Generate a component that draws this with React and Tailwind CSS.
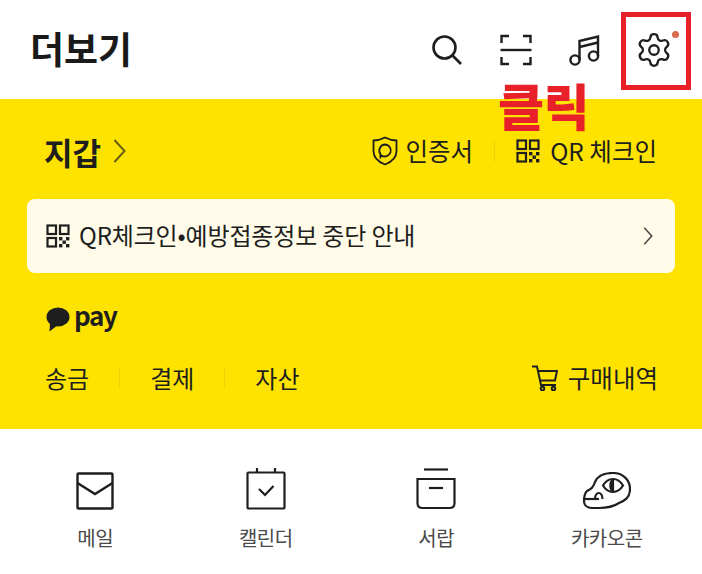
import React from 'react';
import { Settings } from 'lucide-react';

const font = { fontFamily: '"Noto Sans CJK KR", "Noto Sans", sans-serif' };

const Icon = ({ w = 24, h = 24, vb = '0 0 24 24', sw = 2, children }) => (
    <svg width={w} height={h} viewBox={vb} fill="none" stroke="currentColor" strokeWidth={sw} className="shrink-0">
        {children}
    </svg>
);

const QrIcon = () => (
    <svg width="24" height="24" viewBox="0 0 24 24" fill="none" stroke="#1e1e1e" strokeWidth="2.2" className="shrink-0">
        <rect x="1.5" y="1.5" width="8.5" height="8.5" />
        <rect x="14" y="1.5" width="8.5" height="8.5" />
        <rect x="1.5" y="14" width="8.5" height="8.5" />
        <g fill="#1e1e1e" stroke="none">
            <rect x="13" y="13" width="3.4" height="3.4" />
            <rect x="20" y="13" width="3.4" height="3.4" />
            <rect x="16.5" y="16.5" width="3.4" height="3.4" />
            <rect x="13" y="20" width="3.4" height="3.4" />
            <rect x="20" y="20" width="3.4" height="3.4" />
        </g>
    </svg>
);

const Chevron = ({ w, h, color, sw }) => (
    <svg width={w} height={h} viewBox="0 0 12 24" fill="none" stroke={color} strokeWidth={sw} className="shrink-0">
        <path d="M1 1 L11 12 L1 23" />
    </svg>
);

const Divider = () => <div className="w-px h-[22px] bg-[#ecd200]" />;

const tiles = [
    {
        label: '메일',
        icon: (
            <Icon w={38} h={38} vb="0 0 38 38" sw={2.4}>
                <rect x="1.5" y="1.5" width="35" height="35" rx="1" />
                <path d="M1.5 11 L19 22 L36.5 11" />
            </Icon>
        ),
    },
    {
        label: '캘린더',
        icon: (
            <Icon w={40} h={42} vb="0 0 40 42" sw={2.2}>
                <rect x="1.5" y="4.5" width="37" height="36" rx="1" />
                <path d="M11 0 V4.5 M29 0 V4.5" />
                <path d="M13 21 L19 27 L27.5 18" />
            </Icon>
        ),
    },
    {
        label: '서랍',
        icon: (
            <Icon w={40} h={42} vb="0 0 40 42" sw={2.2}>
                <path d="M8 1.5 H32" />
                <path d="M1.5 11 H38.5 V35 Q38.5 40 33.5 40 H6.5 Q1.5 40 1.5 35 Z" />
                <path d="M13 20 H27" />
            </Icon>
        ),
    },
    {
        label: '카카오콘',
        icon: (
            <Icon w={48} h={38} vb="0 0 48 38" sw={2.2}>
                <path d="M4 19 C8 17 10 16 12 10 C15 3 22 1 30 1 C40 1 47 8 47 17 C47 26 41 29 36 31 C30 35 24 36 16 36 H9 C4 36 1 33 1 29 C1 25 2 21 4 19 Z" />
                <path d="M1.5 27 H16 M6 36 V36" />
                <path d="M12 27 C12 23 14 21 15.5 21 C18 21 19.5 24 19.5 27" />
                <path d="M20 13.5 C23 8.5 27 7 30 7 C33 7 37 8.5 40 13.5 C37 18.5 33 20 30 20 C27 20 23 18.5 20 13.5 Z" />
                <path d="M30 8 C26.5 9.5 26.5 17.5 30 19 Z" fill="currentColor" />
            </Icon>
        ),
    },
];

export default function App() {
    return (
        <div className="relative w-[702px] h-[574px] bg-white text-[#1e1e1e] overflow-hidden" style={font}>
            {/* header */}
            <div className="h-[99px] flex items-center justify-between pl-[30px] pr-[14px]">
                <h1 className="text-[37px] font-bold leading-none text-[#1a1a1a] pb-[2px]">더보기</h1>
                <div className="flex items-center">
                    <div className="w-[69px] flex justify-center">
                        <Icon w={32} h={32} vb="0 0 32 32" sw={2.6}>
                            <circle cx="13.5" cy="13.5" r="11" />
                            <path d="M21.5 21.5 L30 30" />
                        </Icon>
                    </div>
                    <div className="w-[69px] flex justify-center">
                        <Icon w={32} h={32} vb="0 0 32 32" sw={2.4}>
                            <path d="M9 2 H1.5 V9 M23 2 H30.5 V9 M1.5 23 V30 H9 M30.5 23 V30 H23" />
                            <path d="M0.5 16 H31.5" />
                        </Icon>
                    </div>
                    <div className="w-[69px] flex justify-center">
                        <Icon w={32} h={32} vb="0 0 32 32" sw={2.4}>
                            <path d="M10.5 26 V7 L29 2.5 V22" />
                            <path d="M10.5 13 L29 8.5" />
                            <circle cx="6" cy="26" r="4.6" />
                            <circle cx="24.5" cy="22" r="4.6" />
                        </Icon>
                    </div>
                    <div className="w-[69px] flex justify-center">
                        <Settings size={38} strokeWidth={1.45} className="shrink-0" />
                    </div>
                </div>
            </div>

            {/* wallet */}
            <section className="h-[330px] bg-[#ffe300] flex flex-col">
                <div className="h-[100px] flex items-center justify-between pl-[44px] pr-[45px] pt-[4px]">
                    <div className="flex items-center gap-[12px]">
                        <span className="text-[31px] font-bold leading-none">지갑</span>
                        <Chevron w={13} h={24} color="#6b5f10" sw={2} />
                    </div>
                    <div className="flex items-center">
                        <svg width="26" height="30" viewBox="0 0 26 30" fill="none" stroke="#1e1e1e" strokeWidth="1.8" className="shrink-0">
                            <path d="M13 1.5 C17 3.5 20.5 4.5 24.5 4.5 V15 C24.5 22 19.5 26 13 28.5 C6.5 26 1.5 22 1.5 15 V4.5 C5.5 4.5 9 3.5 13 1.5 Z" />
                            <path d="M13 8.5 A6 6 0 1 1 9.5 19.5 L8.5 21 L8.3 17.8 A6 6 0 0 1 13 8.5 Z" />
                        </svg>
                        <span className="ml-[8px] text-[24.5px] leading-none">인증서</span>
                        <div className="mx-[21px]"><Divider /></div>
                        <QrIcon />
                        <span className="ml-[10px] text-[24.5px] leading-none">QR 체크인</span>
                    </div>
                </div>

                <div className="mx-[27px] h-[74px] rounded-[8px] bg-[#fffbe8] flex items-center justify-between pl-[19px] pr-[22px]">
                    <div className="flex items-center gap-[9px]">
                        <QrIcon />
                        <span className="text-[24px] leading-none tracking-[-0.15px] pb-[2px]">QR체크인•예방접종정보 중단 안내</span>
                    </div>
                    <Chevron w={10} h={18} color="#444" sw={2} />
                </div>

                <div className="mt-[28px] pl-[46px] flex items-center gap-[4px] h-[36px]">
                    <svg width="24" height="25" viewBox="0 0 24 25" fill="#1e1e1e" className="shrink-0">
                        <ellipse cx="12" cy="10" rx="11.5" ry="9.5" />
                        <path d="M4 15 L3.5 24.5 L12 18 Z" />
                    </svg>
                    <span className="text-[26px] font-bold leading-none tracking-[-1.4px] pb-[8px]">pay</span>
                </div>

                <div className="mt-[28px] pl-[45px] pr-[44px] flex items-center justify-between">
                    <div className="flex items-center text-[24px] leading-none">
                        <span>송금</span>
                        <div className="mx-[30px]"><Divider /></div>
                        <span>결제</span>
                        <div className="mx-[30px]"><Divider /></div>
                        <span>자산</span>
                    </div>
                    <div className="flex items-center gap-[10px]">
                        <Icon w={26} h={26} vb="0 0 26 26" sw={2}>
                            <path d="M0 1.5 H5 L9 20 H24" />
                            <path d="M6 6 H25 L23 15.5 H8" />
                            <circle cx="10.5" cy="23.5" r="1.8" />
                            <circle cx="21.5" cy="23.5" r="1.8" />
                        </Icon>
                        <span className="text-[24.5px] leading-none">구매내역</span>
                    </div>
                </div>
            </section>

            {/* menu tiles */}
            <div className="grid grid-cols-4 px-[10px] pt-[37px]">
                {tiles.map((t) => (
                    <div key={t.label} className="flex flex-col items-center">
                        <div className="h-[44px] flex items-end">{t.icon}</div>
                        <span className="mt-[18px] text-[20px] leading-none text-[#4a4a4a] tracking-[-0.5px]">{t.label}</span>
                    </div>
                ))}
            </div>

            {/* annotation added over the screenshot */}
            <div className="absolute left-[621px] top-[12px] w-[70px] h-[78px] border-[5px] border-[#e8202a]" />
            <div className="absolute left-[672px] top-[31px] w-[7px] h-[7px] rounded-full bg-[#d9694f]" />
            <div className="absolute left-[498px] top-[78px] text-[50px] font-black leading-[52px] text-[#e8202a] tracking-[-0.5px]">클릭</div>
        </div>
    );
}
